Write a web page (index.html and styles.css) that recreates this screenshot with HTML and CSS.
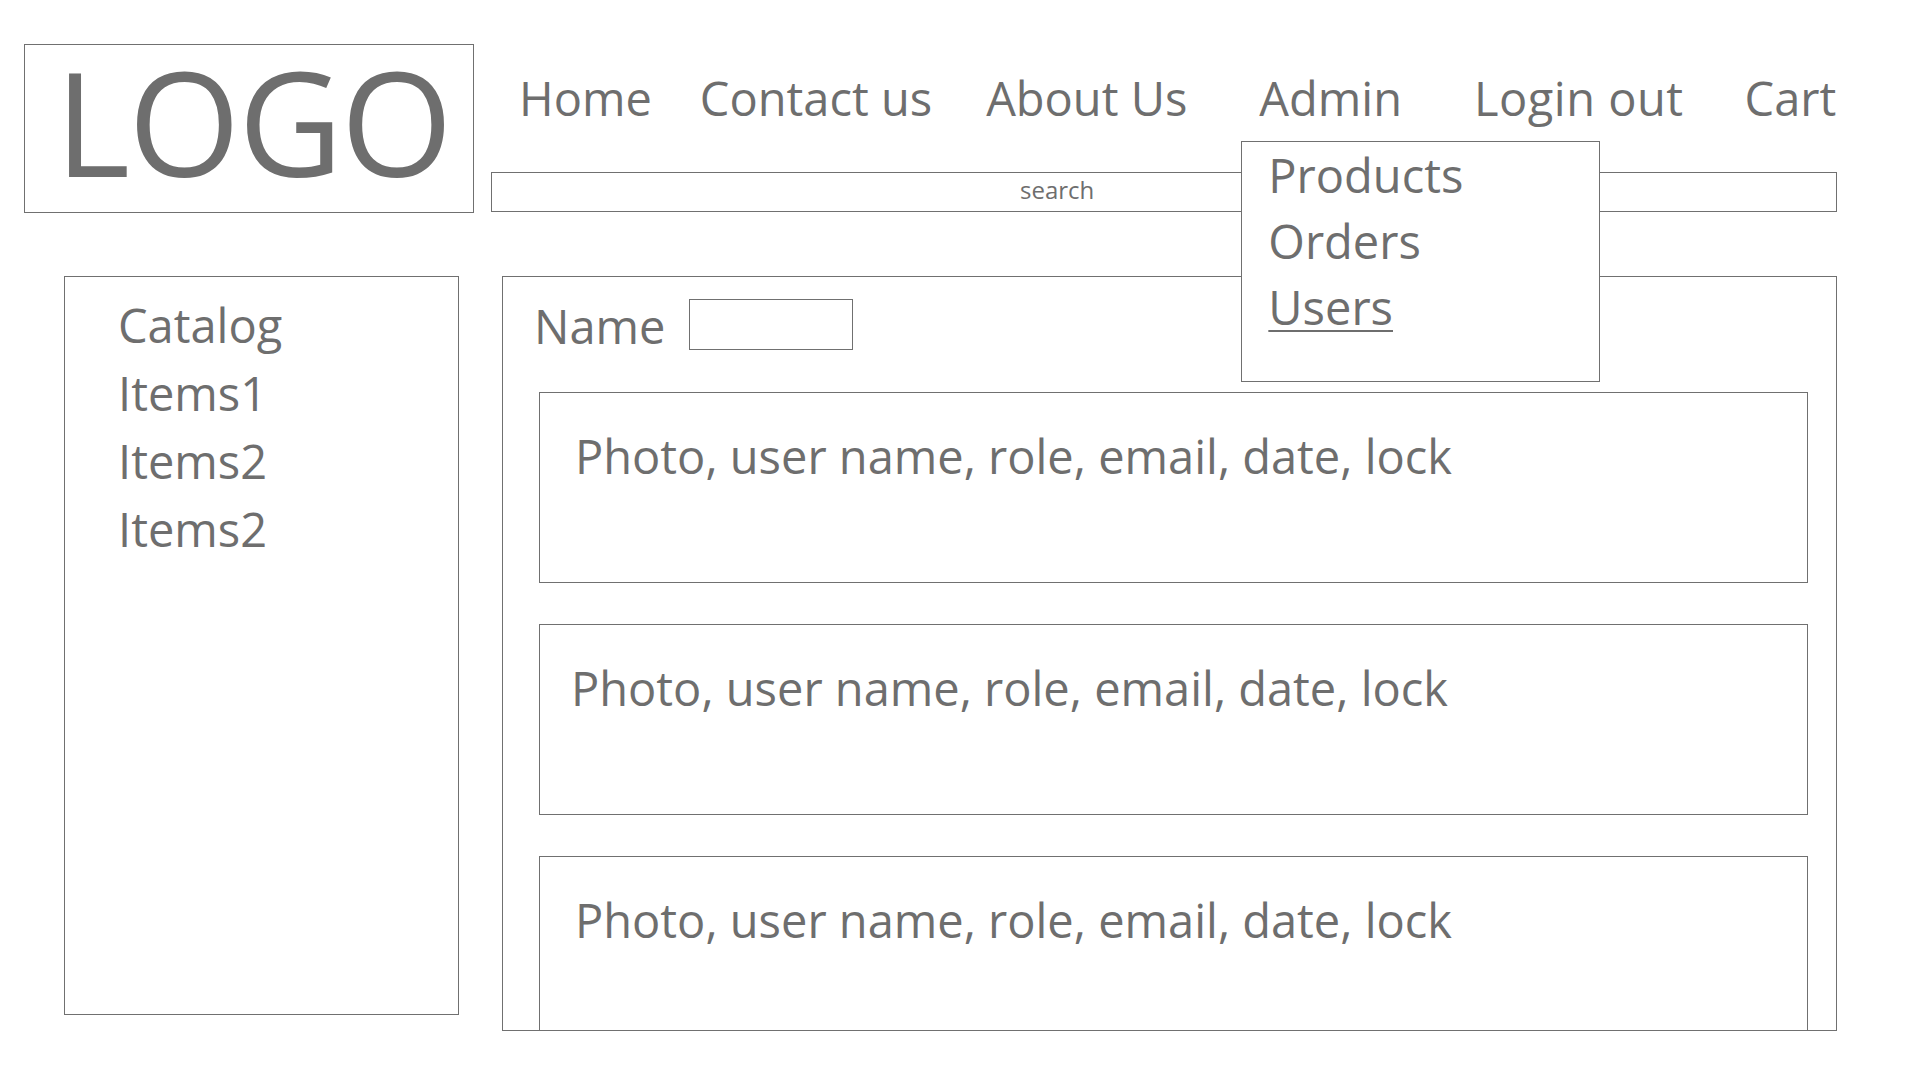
FILE: index.html
```html
<!DOCTYPE html>
<html lang="en">
<head>
<meta charset="utf-8">
<title>Admin - Users</title>
<link rel="stylesheet" href="styles.css">
</head>
<body>
<div class="page">
  <header class="header">
    <div class="logo"><span class="logo__text">LOGO</span></div>
    <div class="header__right">
      <nav class="nav">
        <span class="nav__item nav__item--home">Home</span>
        <span class="nav__item nav__item--contact">Contact us</span>
        <span class="nav__item nav__item--about">About Us</span>
        <span class="nav__item nav__item--admin">Admin
          <span class="dropdown">
            <span class="dropdown__item">Products</span>
            <span class="dropdown__item">Orders</span>
            <span class="dropdown__item dropdown__item--active">Users</span>
          </span>
        </span>
        <span class="nav__item nav__item--login">Login out</span>
        <span class="nav__item nav__item--cart">Cart</span>
      </nav>
      <div class="search"><span class="search__text">search</span></div>
    </div>
  </header>

  <div class="content">
    <aside class="sidebar">
      <div class="sidebar__item">Catalog</div>
      <div class="sidebar__item">Items1</div>
      <div class="sidebar__item">Items2</div>
      <div class="sidebar__item">Items2</div>
    </aside>

    <main class="panel">
      <div class="filter">
        <span class="filter__label">Name</span>
        <div class="filter__input"></div>
      </div>
      <div class="user-list">
        <div class="user-row">Photo, user name, role, email, date, lock</div>
        <div class="user-row user-row--shift">Photo, user name, role, email, date, lock</div>
        <div class="user-row">Photo, user name, role, email, date, lock</div>
      </div>
    </main>
  </div>
</div>
</body>
</html>
```

FILE: styles.css
```css
html, body {
  margin: 0;
  padding: 0;
  background: #ffffff;
}

body {
  font-family: "Open Sans", "Noto Sans", "Liberation Sans", sans-serif;
  color: #6e6e6e;
  width: 1920px;
  height: 1080px;
  overflow: hidden;
}

.page {
  padding: 44px 83px 0 24px;
}

/* ---------- header ---------- */
.header {
  display: flex;
  align-items: flex-start;
}

.logo {
  width: 450px;
  height: 169px;
  box-sizing: border-box;
  border: 1px solid #707070;
  padding: 4px 0 0 30px;
  flex: none;
}

.logo__text {
  display: block;
  font-size: 144px;
  line-height: 144px;
  letter-spacing: -2px;
}

.header__right {
  flex: 1;
  min-width: 0;
  margin-left: 17px;
  display: flex;
  flex-direction: column;
}

.nav {
  display: flex;
  padding: 21px 0 0 28px;
  font-size: 47px;
  line-height: 67px;
  white-space: nowrap;
}

.nav__item {
  display: block;
}

.nav__item--contact { margin-left: 48px; }
.nav__item--about   { margin-left: 54px; }
.nav__item--admin   { margin-left: 72px; position: relative; }
.nav__item--login   { margin-left: 72px; letter-spacing: 0.5px; }
.nav__item--cart    { margin-left: 61px; }

.dropdown {
  position: absolute;
  left: -18px;
  top: 76px;
  width: 359px;
  height: 241px;
  box-sizing: border-box;
  border: 1px solid #707070;
  background: #ffffff;
  padding-left: 26px;
  z-index: 10;
  display: flex;
  flex-direction: column;
  line-height: 66px;
  letter-spacing: 0;
}

.dropdown__item {
  display: block;
}

.dropdown__item--active {
  text-decoration: underline;
  text-decoration-thickness: 2px;
  text-underline-offset: 5px;
}

.search {
  margin-top: 40px;
  height: 40px;
  box-sizing: border-box;
  border: 1px solid #707070;
  padding-left: 528px;
  font-size: 24px;
  line-height: 34px;
}

/* ---------- content ---------- */
.content {
  display: flex;
  align-items: flex-start;
  margin-top: 63px;
  padding-left: 40px;
}

.sidebar {
  width: 395px;
  height: 739px;
  box-sizing: border-box;
  border: 1px solid #707070;
  padding: 14px 0 0 53px;
  font-size: 47px;
  line-height: 68px;
  flex: none;
}

.panel {
  flex: 1;
  min-width: 0;
  margin-left: 43px;
  height: 755px;
  box-sizing: border-box;
  border: 1px solid #707070;
  padding: 16px 28px 0 31px;
  overflow: hidden;
  font-size: 47px;
  line-height: 67px;
}

.filter {
  display: flex;
  align-items: flex-start;
}

.filter__input {
  width: 164px;
  height: 51px;
  box-sizing: border-box;
  border: 1px solid #707070;
  margin: 6px 0 0 24px;
}

.user-list {
  display: flex;
  flex-direction: column;
  gap: 41px;
  margin-top: 32px;
  margin-left: -1px;
  padding-left: 6px;
}

.user-row {
  height: 191px;
  flex: none;
  box-sizing: border-box;
  border: 1px solid #707070;
  padding: 30px 0 0 35px;
  white-space: nowrap;
}

.user-row--shift {
  padding-left: 31px;
}
```
